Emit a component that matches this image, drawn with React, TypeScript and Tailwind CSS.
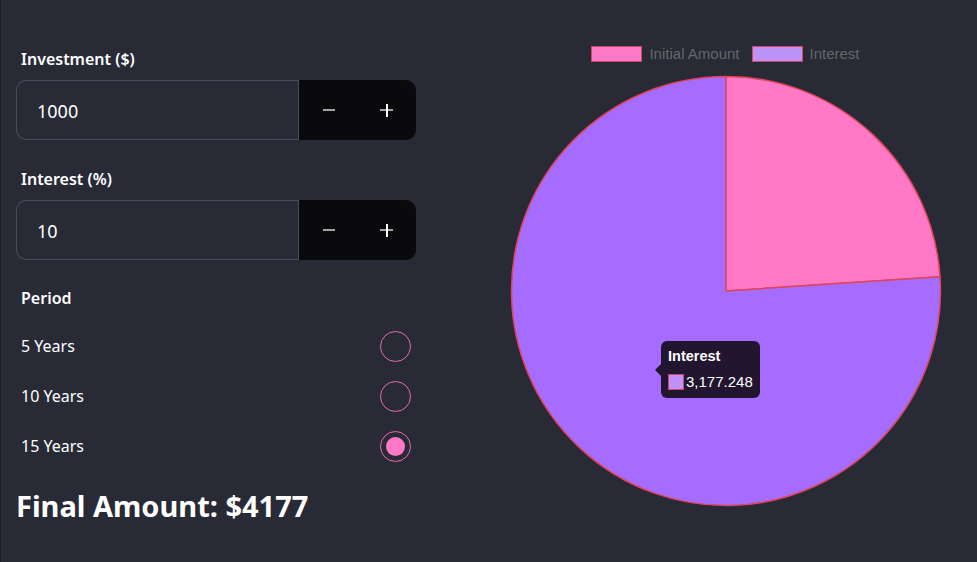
import React from "react";

const font = { fontFamily: '"Noto Sans", "Open Sans", sans-serif' };

function NumberField({ value }: { value: string }) {
  return (
    <div className="flex h-[60px] w-[400px]">
      <div className="flex flex-1 items-center rounded-l-[10px] border border-r-0 border-[#4b4e5a] pl-[20px] pt-[3px] text-[18px] text-white">
        {value}
      </div>
      <div className="w-px bg-[#4b4e5a]" />
      <div className="flex w-[117px] items-center rounded-r-[10px] bg-[#0a0a0c]">
        <div className="flex w-[58px] justify-center pl-[2px]">
          <div className="h-[2px] w-[12px] bg-[#a3a3a3]" />
        </div>
        <div className="relative flex w-[58px] justify-center pl-[1px]">
          <div className="relative h-[13px] w-[13px]">
            <div className="absolute left-0 top-[5.5px] h-[2px] w-[13px] bg-[#a3a3a3]" />
            <div className="absolute left-[5.5px] top-0 h-[13px] w-[2px] bg-white" />
          </div>
        </div>
      </div>
    </div>
  );
}

function Radio({ label, checked }: { label: string; checked?: boolean }) {
  return (
    <div className="flex h-[50px] items-center justify-between pl-[5px] pr-[5px]">
      <span className="text-[16px] text-white">{label}</span>
      <div className="flex h-[31px] w-[31px] items-center justify-center rounded-full border-[1.5px] border-[#e86aaf]">
        {checked && <div className="h-[19px] w-[19px] rounded-full bg-[#ff79c6]" />}
      </div>
    </div>
  );
}

function Chart() {
  const cx = 217;
  const cy = 217;
  const r = 214.5;
  const frac = 1000 / 4177.248;
  const ang = -Math.PI / 2 + frac * Math.PI * 2;
  const ex = cx + r * Math.cos(ang);
  const ey = cy + r * Math.sin(ang);
  const pink = `M${cx},${cy} L${cx},${cy - r} A${r},${r} 0 0 1 ${ex},${ey} Z`;
  const purple = `M${cx},${cy} L${ex},${ey} A${r},${r} 0 1 1 ${cx},${cy - r} Z`;
  const legendFont = { fontFamily: '"Liberation Sans", Arial, sans-serif' };
  return (
    <div className="relative flex w-[503px] flex-col items-center pt-[46px]">
      <div className="flex items-center text-[15px] text-[#666666]" style={legendFont}>
        <div className="h-[16px] w-[51px] border-[1.5px] border-[#d0455f] bg-[#ff79c6]" />
        <span className="ml-[7px] leading-[16px]">Initial Amount</span>
        <div className="ml-[12px] h-[16px] w-[51px] border-[1.5px] border-[#d0455f] bg-[#bd93f9]" />
        <span className="ml-[7px] leading-[16px]">Interest</span>
      </div>
      <svg width="434" height="434" className="mt-[12px]" viewBox="0 0 434 434">
        <path d={pink} fill="#ff79c6" stroke="#e0445a" strokeWidth="1.5" strokeLinejoin="round" />
        <path d={purple} fill="#a66cff" stroke="#e0445a" strokeWidth="1.5" strokeLinejoin="round" />
      </svg>
      <div
        className="absolute left-[187px] top-[341px] h-[57px] rounded-[6px] bg-[#21152f] px-[7px] pt-[6px] text-white"
        style={legendFont}
      >
        <div className="absolute left-[-6px] top-[23px] h-0 w-0 border-y-[6px] border-r-[6px] border-y-transparent border-r-[#21152f]" />
        <div className="text-[14.5px] font-bold leading-[18px]">Interest</div>
        <div className="mt-[8px] flex items-center text-[15px] leading-[18px]">
          <div className="mr-[2px] h-[16px] w-[16px] border-[1.5px] border-[#d0455f] bg-[#bd93f9]" />
          <span>3,177.248</span>
        </div>
      </div>
    </div>
  );
}

export default function App() {
  return (
    <div className="flex h-[562px] w-[977px] border-l border-[#1f2029] bg-[#282a36]" style={font}>
      <div className="ml-[15px] flex w-[400px] flex-col pt-[45px]">
        <div className="pl-[5px] text-[16px] font-semibold leading-[28px] text-white">Investment ($)</div>
        <div className="mt-[7px]">
          <NumberField value="1000" />
        </div>
        <div className="mt-[25px] pl-[5px] text-[16px] font-semibold leading-[28px] text-white">Interest (%)</div>
        <div className="mt-[7px]">
          <NumberField value="10" />
        </div>
        <div className="mt-[24px] pl-[5px] text-[16px] font-semibold leading-[28px] text-white">Period</div>
        <div className="mt-[9px] flex flex-col">
          <Radio label="5 Years" />
          <Radio label="10 Years" />
          <Radio label="15 Years" checked />
        </div>
        <div className="mt-[17px] text-[29px] font-bold leading-[36px] text-white">Final Amount: $4177</div>
      </div>
      <div className="ml-auto">
        <Chart />
      </div>
    </div>
  );
}
